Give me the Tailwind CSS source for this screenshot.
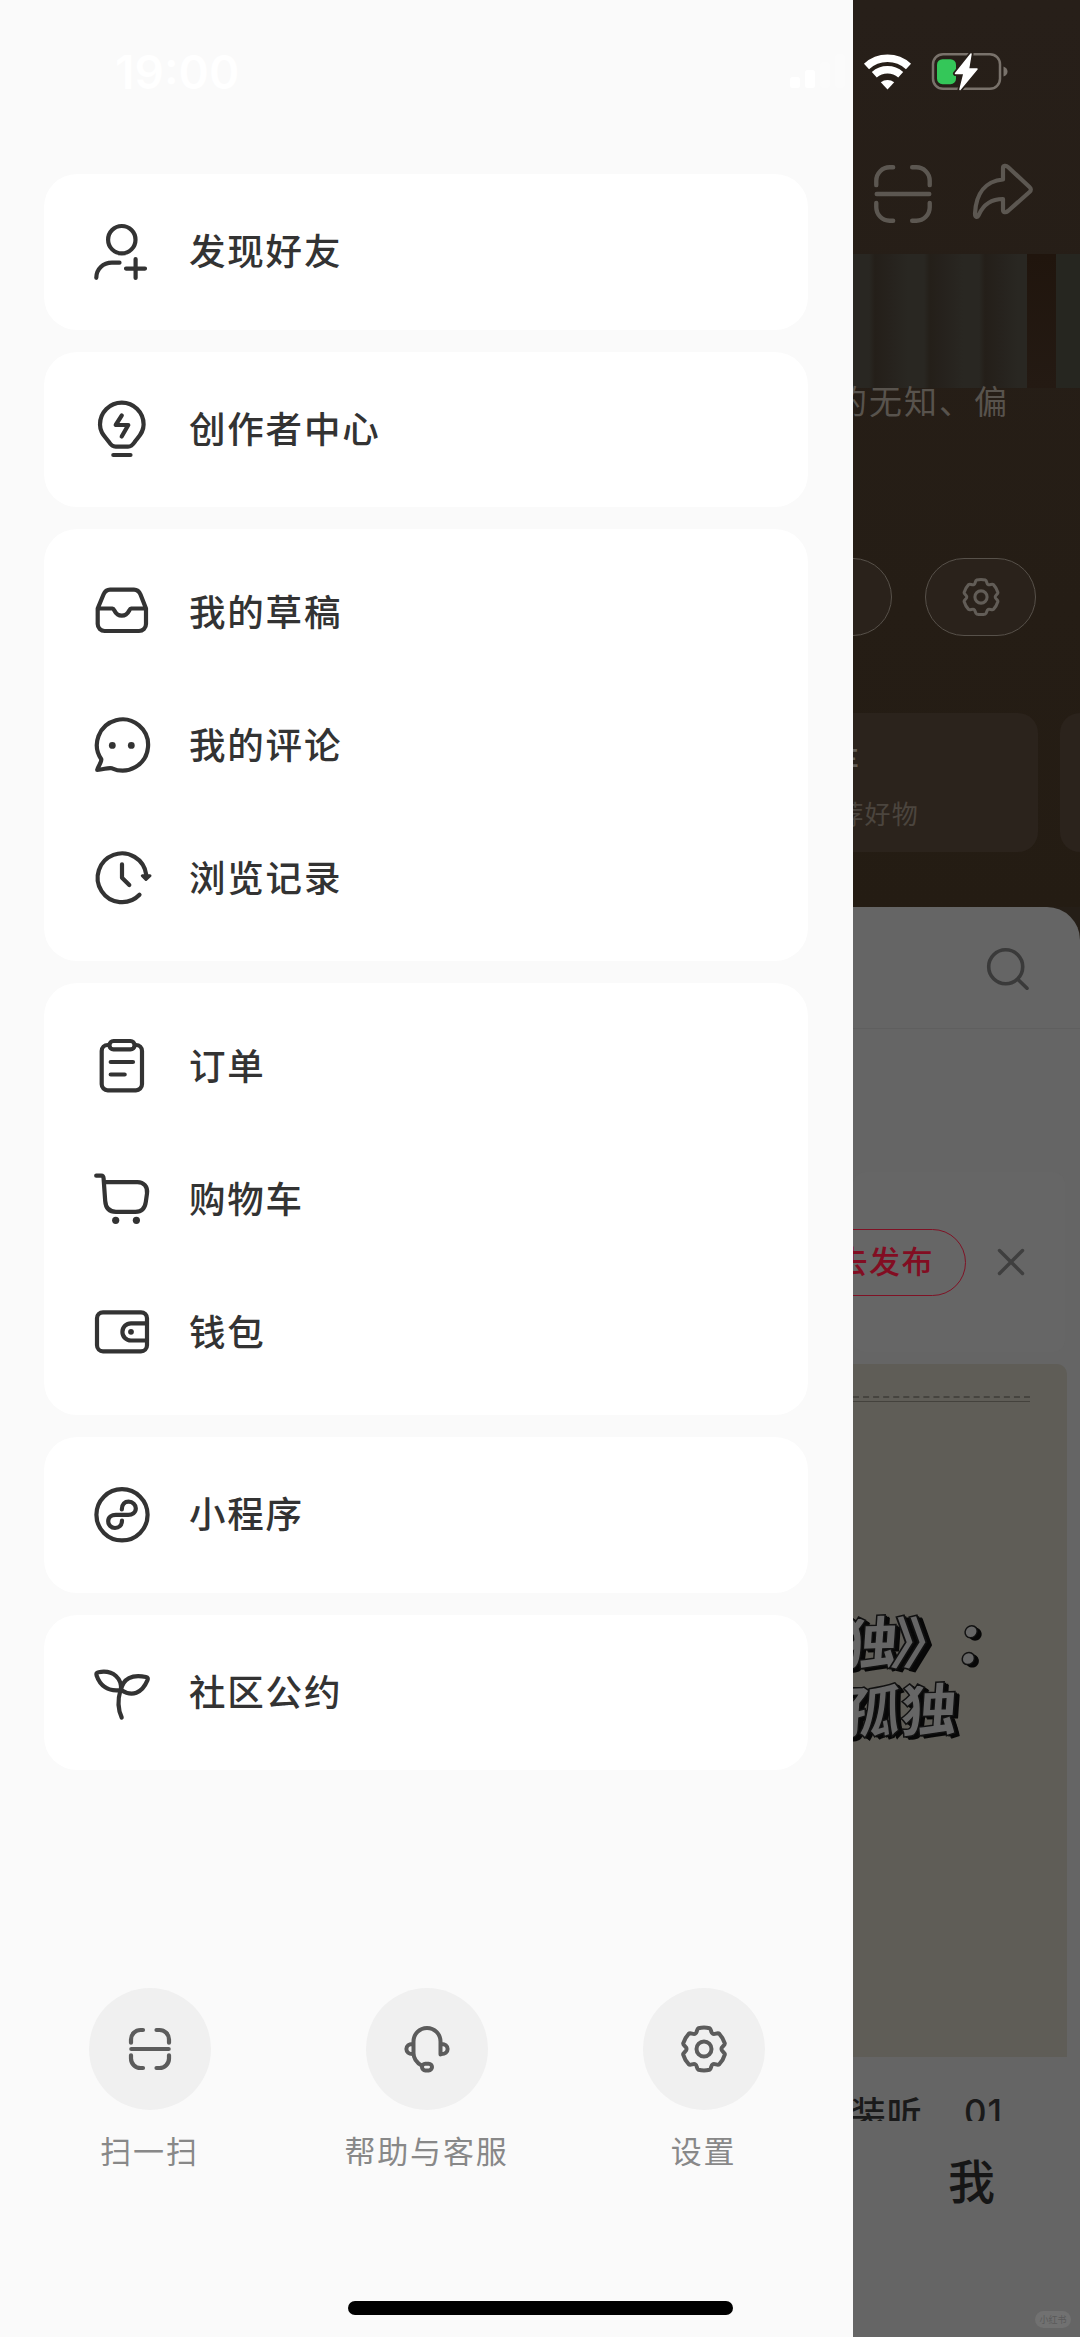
<!DOCTYPE html>
<html lang="zh-CN">
<head>
<meta charset="utf-8">
<title>我</title>
<script src="https://cdn.jsdelivr.net/npm/@tailwindcss/browser@4"></script>
</head>
<body class="relative flex h-[2337px] w-[1080px] overflow-hidden bg-[#251e17] font-['Noto_Sans_CJK_SC',sans-serif]">

<!-- shared glyphs -->
<svg class="hidden">
  <symbol id="gear" viewBox="0 0 64 64">
    <path d="M26.5 11.2Q32 9.8 37.5 11.2C39.5 12 38.6 15.8 40.8 16.8C42.8 17.9 45.6 15.2 47.3 16.8Q51.2 20.9 52.8 26.4C53.1 28.5 49.3 29.6 49.5 32C49.3 34.4 53.1 35.5 52.8 37.6Q51.2 43.1 47.3 47.2C45.6 48.8 42.8 46.1 40.8 47.2C38.6 48.2 39.5 52 37.5 52.8Q32 54.2 26.5 52.8C24.5 52 25.4 48.2 23.2 47.2C21.2 46.1 18.4 48.8 16.7 47.2Q12.8 43.1 11.2 37.6C10.9 35.5 14.7 34.4 14.5 32C14.7 29.6 10.9 28.5 11.2 26.4Q12.8 20.9 16.7 16.8C18.4 15.2 21.2 17.9 23.2 16.8C25.4 15.8 24.5 12 26.5 11.2Z"/>
    <circle cx="32" cy="32" r="7.5"/>
  </symbol>
  <symbol id="scan" viewBox="0 0 64 64">
    <path d="M13 25.7V22.5A9.5 9.5 0 0 1 22.5 13H25M38.5 13H41.5A9.5 9.5 0 0 1 51 22.5V25.7M13 38.3V41.5A9.5 9.5 0 0 0 22.5 51H25M38.5 51H41.5A9.5 9.5 0 0 0 51 41.5V38.3M13.3 32H50.7"/>
  </symbol>
</svg>

<!-- drawer -->
<aside class="flex w-[853px] shrink-0 flex-col bg-[#fafafa] px-11 pt-[174px]">
  <nav class="flex w-[764px] flex-col gap-[22px] text-[36.5px] font-medium tracking-[1.8px] text-[#333] [&_span]:-mt-0.5">
    <div class="flex h-[155.5px] items-center gap-[35px] rounded-[33px] bg-white pl-[46px]">
      <svg class="size-16 fill-none stroke-[#333] stroke-[4.2] [stroke-linecap:round] [stroke-linejoin:round]" viewBox="0 0 64 64"><circle cx="31.8" cy="19.7" r="13.7"/><path d="M6.3 57.8C6.3 49 13 42.7 22 42.7H29.5M36 48.6H55M45.6 39V58"/></svg>
      <span>发现好友</span>
    </div>
    <div class="flex h-[155.5px] items-center gap-[35px] rounded-[33px] bg-white pl-[46px]">
      <svg class="size-16 fill-none stroke-[#333] stroke-[4.2] [stroke-linecap:round] [stroke-linejoin:round]" viewBox="0 0 64 64"><path d="M19 45C15 39.5 10 36 10 27.5A21.8 21.8 0 0 1 53.6 27.5C53.6 36 48.5 39.5 44.7 45C42.5 48.5 41 49.6 38 49.6H25.7C22.5 49.6 21 48.3 19 45ZM23.3 58H40.5M31.8 18.4L25.7 28H38.3L31.7 39.5"/></svg>
      <span>创作者中心</span>
    </div>
    <div class="flex h-[432px] flex-col justify-center rounded-[33px] bg-white pl-[46px]">
      <div class="flex h-[133px] items-center gap-[35px]">
        <svg class="size-16 fill-none stroke-[#333] stroke-[4.2] [stroke-linecap:round] [stroke-linejoin:round]" viewBox="0 0.5 64 64"><path d="M7.7 29V44.5A7 7 0 0 0 14.7 51.5H49A7 7 0 0 0 56 44.5V29L50.5 15C49 11.5 47.5 10.2 44 10.2H20C16.5 10.2 15 11.5 13.5 15ZM7.7 29H22.5C25 29 24.3 36.2 31.8 36.2C39.3 36.2 38.6 29 41.1 29H56"/></svg>
        <span>我的草稿</span>
      </div>
      <div class="flex h-[133px] items-center gap-[35px]">
        <svg class="size-16 fill-none stroke-[#333] stroke-[4.2] [stroke-linecap:round] [stroke-linejoin:round]" viewBox="0 0.5 64 64"><path d="M11.3 46.8A25.6 25.6 0 1 1 22 55.8C17.5 54.8 14 57.2 7.2 57.4C8.2 53.5 11.8 49.5 11.3 46.8Z"/><circle cx="22.3" cy="32.9" r="3.4" class="fill-[#333] stroke-none"/><circle cx="41.3" cy="32.9" r="3.4" class="fill-[#333] stroke-none"/></svg>
        <span>我的评论</span>
      </div>
      <div class="flex h-[133px] items-center gap-[35px]">
        <svg class="size-16 fill-none stroke-[#333] stroke-[4.2] [stroke-linecap:round] [stroke-linejoin:round]" viewBox="0 0.5 64 64"><path d="M49.5 49.3A24.4 24.4 0 1 1 56.2 29M32 18.8V32.2L39.3 39.5"/><path d="M52.3 30.2H60L56 34Z" class="fill-[#333] stroke-[3]"/></svg>
        <span>浏览记录</span>
      </div>
    </div>
    <div class="flex h-[432px] flex-col justify-center rounded-[33px] bg-white pl-[46px]">
      <div class="flex h-[133px] items-center gap-[35px]">
        <svg class="size-16 fill-none stroke-[#333] stroke-[4.2] [stroke-linecap:round] [stroke-linejoin:round]" viewBox="0 0.5 64 64"><path d="M19 11.5H17.7A6 6 0 0 0 11.7 17.5V50.8A6 6 0 0 0 17.7 56.8H46A6 6 0 0 0 52 50.8V17.5A6 6 0 0 0 46 11.5H45M20.7 28.5H43M20.7 41H34.7"/><rect x="19.5" y="7.5" width="25" height="8.4" rx="4"/></svg>
        <span>订单</span>
      </div>
      <div class="flex h-[133px] items-center gap-[35px]">
        <svg class="size-16 fill-none stroke-[#333] stroke-[4.2] [stroke-linecap:round] [stroke-linejoin:round]" viewBox="0 0.5 64 64"><path d="M6.2 9.2H11.3C13 9.2 13.5 10.5 13.6 12L15.2 34.5C15.7 41.5 19.5 45.3 26 45.3H45.5C51.5 45.3 55 41.5 55.8 35.5L57 27C58 20 53.5 15.6 47.5 15.6H14"/><circle cx="25.7" cy="53.8" r="3.6" class="fill-[#333] stroke-none"/><circle cx="46.4" cy="53.8" r="3.6" class="fill-[#333] stroke-none"/></svg>
        <span>购物车</span>
      </div>
      <div class="flex h-[133px] items-center gap-[35px]">
        <svg class="size-16 fill-none stroke-[#333] stroke-[4.2] [stroke-linecap:round] [stroke-linejoin:round]" viewBox="0 0.5 64 64"><rect x="7" y="12.8" width="50" height="39" rx="6"/><path d="M57 23.8H41A8.6 8.6 0 0 0 41 41H57"/><circle cx="41" cy="32.3" r="2.9" class="fill-[#333] stroke-none"/></svg>
        <span>钱包</span>
      </div>
    </div>
    <div class="flex h-[155.5px] items-center gap-[35px] rounded-[33px] bg-white pl-[46px]">
      <svg class="size-16 fill-none stroke-[#333] stroke-[4.2] [stroke-linecap:round] [stroke-linejoin:round]" viewBox="0 0 64 64"><circle cx="32" cy="31.8" r="25.6"/><path d="M31.8 26.5C31.8 21 35 18.7 38.6 18.7C42.8 18.7 45.8 21.8 45.8 25.3C45.8 29.8 42 31.8 38.3 31.8H25.7C22 31.8 18.2 34 18.2 38.2C18.2 42 21.2 45 25 45C28.8 45 32 42.5 32 37.5"/></svg>
      <span>小程序</span>
    </div>
    <div class="flex h-[155.5px] items-center gap-[35px] rounded-[33px] bg-white pl-[46px]">
      <svg class="size-16 fill-none stroke-[#333] stroke-[4.2] [stroke-linecap:round] [stroke-linejoin:round]" viewBox="0 0 64 64"><path d="M31 30C32 19 24 9.500 8.500 12.200C6.500 12.600 6 13.800 6.600 15.500C10 25.500 18 32 31 30ZM31 30C33 18.500 42 14 56 17C57.800 17.400 58.200 18.600 57.500 20.200C52 33.500 42 37 31 30ZM30.500 30C27.500 40 28 49.500 31.700 57.500"/></svg>
      <span>社区公约</span>
    </div>
  </nav>

  <div class="mt-[218px] flex justify-between text-[31px] tracking-[1.8px] text-[#888]">
    <div class="flex w-[211px] flex-col items-center gap-[17px]">
      <div class="flex size-[122px] items-center justify-center rounded-full bg-[#f0f0f0]"><svg class="size-16 fill-none stroke-[#5c5c5c] stroke-[4.2] [stroke-linecap:round]"><use href="#scan"/></svg></div>
      <span>扫一扫</span>
    </div>
    <div class="flex w-[211px] flex-col items-center gap-[17px]">
      <div class="flex size-[122px] items-center justify-center rounded-full bg-[#f0f0f0]"><svg class="size-16 fill-none stroke-[#5c5c5c] stroke-[4] [stroke-linecap:round]" viewBox="0 0 64 64"><path d="M45.500 37.500V24.500A13.500 13.500 0 0 0 18.500 24.500V36C18.500 42 22 46 27 48.700M18.500 27C9 26 9 38 18.500 37M45.500 27C55 26 55 38 45.500 37"/><rect x="27" y="46.800" width="10" height="6.600" rx="3.300"/></svg></div>
      <span class="whitespace-nowrap">帮助与客服</span>
    </div>
    <div class="flex w-[211px] flex-col items-center gap-[17px]">
      <div class="flex size-[122px] items-center justify-center rounded-full bg-[#f0f0f0]"><svg class="size-16 fill-none stroke-[#5c5c5c] stroke-[4]"><use href="#gear"/></svg></div>
      <span>设置</span>
    </div>
  </div>
</aside>

<!-- dimmed profile page -->
<main class="flex w-[227px] flex-col overflow-hidden">
  <section class="flex h-[907px] shrink-0 flex-col bg-linear-to-b from-[#271f19] to-[#241c13]">
    <div class="flex h-[254px] shrink-0 gap-[23px] pt-[162px] pl-[5px]">
      <svg class="-mt-[7px] -mr-[1px] size-[90px] shrink-0 -translate-y-1.5 fill-none stroke-[#5c5751] stroke-[3.1] [stroke-linecap:round]" viewBox="0 0 64 64"><use href="#scan"/></svg>
      <svg class="-mt-px size-16 shrink-0 fill-none stroke-[#5c5751] stroke-[4.2] [stroke-linejoin:round]" viewBox="-5 0 64 64"><path d="M28 7C28 4.500 31 4.200 33 6L54.500 26C56.300 27.700 56.300 29.300 54.500 31L33 50C30.500 52 28 51.500 28 49V38C17 38 9 42.500 4 53.500C2 57.500 0 56 0 52.500C1 32 11 20 28 18.500Z"/></svg>
    </div>
    <div class="flex h-[134px] shrink-0 bg-[repeating-linear-gradient(90deg,#292722_0px,#292722_16px,#241f19_22px,#26221d_36px,#292722_55px)]">
      <div class="ml-[174px] h-full w-[29px] bg-linear-to-b from-[#20150d] to-[#241a13]"></div>
      <div class="grow bg-[#262620]"></div>
    </div>
    <div class="-mt-0.5 flex h-7 shrink-0 items-center justify-end pr-[71px] text-[33px] leading-7 tracking-[2px] whitespace-nowrap text-[#58534d]">的无知、偏</div>
    <div class="mt-[144px] flex h-[78px] shrink-0 gap-[33px]">
      <div class="-ml-[100px] w-[139px] shrink-0 rounded-full border-[1.5px] border-[#57514a] bg-[#2a221b]"></div>
      <div class="flex w-[111px] shrink-0 items-center justify-center rounded-full border-[1.5px] border-[#57514a] bg-[#2a221b]"><svg class="size-[52px] fill-none stroke-[#625d57] stroke-[3.8]" viewBox="0 0 64 64"><use href="#gear"/></svg></div>
    </div>
    <div class="mt-[77px] flex h-[139px] shrink-0 gap-[22px]">
      <div class="-ml-[60px] flex w-[245px] shrink-0 flex-col rounded-[20px] bg-[#2b231c] pt-[23px] whitespace-nowrap">
        <div class="flex h-11 items-center justify-end pr-[179px] text-[29px] font-medium text-[#625e58]">购物车</div>
        <div class="mt-2.5 flex h-11 items-center justify-end pr-[119px] text-[26px] tracking-[1.2px] text-[#4b453e]">推荐好物</div>
      </div>
      <div class="w-[100px] shrink-0 rounded-[20px] bg-[#2b231c]"></div>
    </div>
  </section>

  <section class="flex grow flex-col rounded-tr-[33px] bg-[#656565]">
    <div class="flex h-[122px] shrink-0 items-start justify-end border-b-[1.5px] border-[#5f5f5f] pt-[35px] pr-[46px]">
      <svg class="size-12 fill-none stroke-[#3a3a3a] stroke-[3.6] [stroke-linecap:round]" viewBox="0 0 48 48"><circle cx="19.700" cy="24.700" r="17"/><path d="M32 37.500L41 46.300"/></svg>
    </div>
    <div class="mt-[143px] mr-[15px] flex h-[180px] shrink-0 items-center justify-end gap-[33px] rounded-xl bg-[#666] pr-[42px]">
      <div class="flex h-[67px] w-[200px] shrink-0 items-center justify-end rounded-full border-[1.5px] border-[#7f1225] pr-[31px] pb-[3px] text-[31px] font-medium tracking-[1.500px] text-[#820d22]">去发布</div>
      <svg class="size-6 shrink-0 overflow-visible stroke-[#3f3f3f] stroke-[3.4] [stroke-linecap:round]" viewBox="0 0 24 24"><path d="M0.500 0.500L23.500 23.500M23.500 0.500L0.500 23.500"/></svg>
    </div>
    <article class="mt-[12px] mr-[13px] flex h-[693px] shrink-0 flex-col rounded-tr-[10px] bg-[#5f5d57]">
      <div class="mt-[32px] mr-[37px] h-[6px] border-t-2 border-b-[1.5px] border-t-[#46443f] border-b-[#44423d] [border-top-style:dashed]"></div>
      <div class="mt-[203px] flex h-[68px] items-center justify-end pr-[54px] text-[57px] leading-none font-black whitespace-nowrap text-[#666] [-webkit-text-stroke:1.500px_#111] [text-shadow:2px_1px_0_#080808,4px_2px_0_#080808,5px_3px_0_#080808]"><span class="-rotate-2 -skew-x-6">独</span><span class="-skew-x-6 scale-x-125">》</span><span class="-skew-x-6">：</span></div>
      <div class="flex h-[68px] items-center justify-end pr-[109px] text-[57px] leading-none font-black whitespace-nowrap text-[#666] [-webkit-text-stroke:1.500px_#111] [text-shadow:2px_1px_0_#080808,4px_2px_0_#080808,5px_3px_0_#080808]"><span class="-rotate-2 -skew-x-6">孤独</span></div>
    </article>
    <div class="flex h-[64px] shrink-0 items-start justify-end overflow-hidden pt-[32px] pr-[77px] text-[35px] leading-[46px] font-medium tracking-[1px] whitespace-pre text-[#1a1a1a]"><span class="mr-[41px]">装听</span><span class="font-['Inter','Noto_Sans_CJK_SC',sans-serif]">01</span></div>
    <div class="flex grow flex-col justify-between">
      <div class="mt-[26px] ml-[95px] text-[47px] leading-[64px] font-medium text-[#161616]">我</div>
      <div class="mr-[9px] mb-[9px] flex h-[17px] w-9 items-center justify-center self-end rounded-full bg-[#717171] text-[9px] leading-none text-[#5a5a5a]">小红书</div>
    </div>
  </section>
</main>

<!-- status bar overlay -->
<header class="absolute inset-x-0 top-0 flex h-36 items-center text-white">
  <span class="ml-[115px] w-[675px] font-['Inter',sans-serif] text-[46px] font-semibold">19:00</span>
  <svg class="h-10 w-[55px] fill-white" viewBox="0 0 55 40"><rect x="0" y="25" width="10" height="11" rx="2.500"/><rect x="15" y="18" width="10" height="18" rx="2.500"/><g class="opacity-20"><rect x="30" y="10" width="10" height="26" rx="2.500"/><rect x="45" y="2" width="10" height="34" rx="2.500"/></g></svg>
  <svg class="ml-[18px] h-10 w-[50px] fill-none stroke-white stroke-[7.500]" viewBox="0 0 50 40"><path d="M3.500 14.500A31 31 0 0 1 45.500 14.500M11.300 22.800A20 20 0 0 1 37.700 22.800"/><path d="M24.500 37.500L17.800 30.300A10.500 10.500 0 0 1 31.200 30.300Z" class="fill-white stroke-none"/></svg>
  <svg class="ml-[18px] h-10 w-20" viewBox="0 0 80 40"><rect x="2" y="2.200" width="67" height="34.500" rx="10" class="fill-none stroke-[#79726b] stroke-[2.500]"/><path d="M72.500 14.500Q76.500 16 76.500 19.500T72.500 24.500Z" class="fill-[#79726b]"/><rect x="6" y="7.200" width="19" height="25" rx="5.500" class="fill-[#34c759]"/><path d="M40 2L24.500 21.500H33L29 37.500L46 17H37.500Z" class="fill-white stroke-[#28201a] stroke-[5] [paint-order:stroke] [stroke-linejoin:round]"/><path d="M40 2L24.500 21.500H33L29 37.500L46 17H37.500Z" class="fill-white stroke-white stroke-[1.500] [stroke-linejoin:round]"/></svg>
</header>

<div class="absolute top-[2301px] left-[348px] h-[14px] w-[385px] rounded-full bg-black"></div>
</body>
</html>
